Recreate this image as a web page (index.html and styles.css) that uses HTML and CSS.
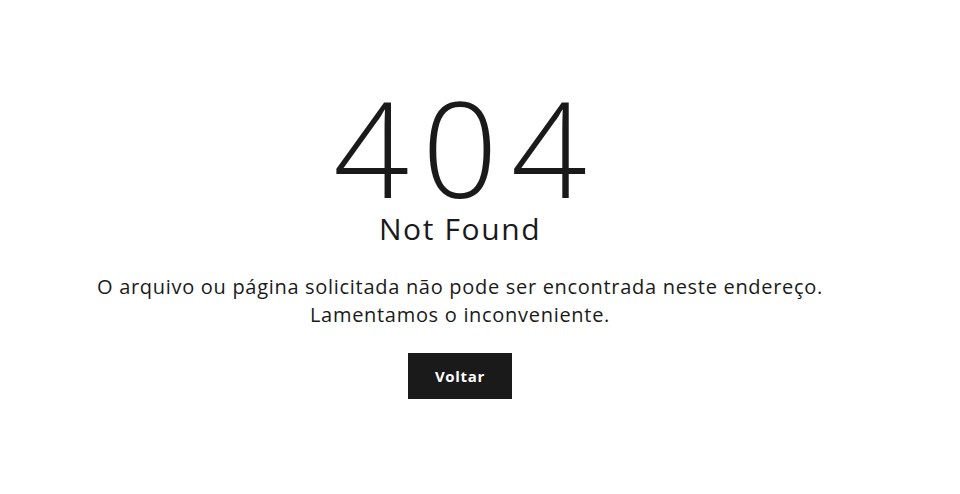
FILE: index.html
```html
<!DOCTYPE html>
<html lang="pt">
<head>
<meta charset="utf-8">
<title>404 Not Found</title>
<link rel="stylesheet" href="styles.css">
</head>
<body>
<main class="page">
  <h1 class="code">404</h1>
  <h2 class="title">Not Found</h2>
  <p class="message">O arquivo ou página solicitada não pode ser encontrada neste endereço.<br>Lamentamos o inconveniente.</p>
  <a class="btn" href="#">Voltar</a>
</main>
</body>
</html>
```
FILE: styles.css
```css
html, body {
  margin: 0;
  padding: 0;
  background: #fff;
}
body {
  font-family: "Open Sans", "Liberation Sans", sans-serif;
  color: #1a1a1a;
}
.page {
  width: 920px;
  display: flex;
  flex-direction: column;
  align-items: center;
  text-align: center;
  padding-top: 82px;
}
.code {
  margin: 0;
  font-size: 133px;
  font-weight: 300;
  line-height: 129px;
  letter-spacing: 13px;
  text-indent: 13px;
}
.title {
  margin: 0;
  font-size: 30px;
  font-weight: 400;
  line-height: 36px;
  letter-spacing: 1.6px;
}
.message {
  margin: 26px 0 0;
  font-size: 20px;
  line-height: 28px;
  letter-spacing: 0.7px;
}
.btn {
  margin-top: 24px;
  display: inline-flex;
  align-items: center;
  justify-content: center;
  width: 104px;
  height: 46px;
  background: #1a1a1a;
  color: #fff;
  font-size: 15px;
  font-weight: 700;
  letter-spacing: 0.7px;
  text-decoration: none;
}
```
